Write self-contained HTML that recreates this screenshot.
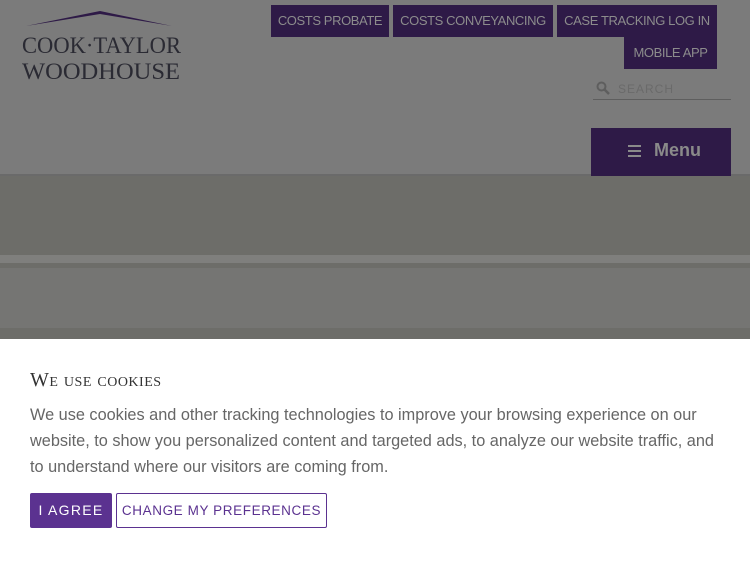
<!DOCTYPE html>
<html><head><meta charset="utf-8"><style>
*{margin:0;padding:0;box-sizing:border-box}
body{width:750px;height:563px;overflow:hidden;background:#fff;font-family:"Liberation Sans",sans-serif;position:relative}
.hdr{position:absolute;left:0;top:0;width:750px;height:176px;background:#7b7b7b;border-bottom:2px solid #6a6a6a}
.hero{position:absolute;left:0;top:176px;width:750px;height:163px;background:#6d6d69}
.l1{position:absolute;left:0;top:255px;width:750px;height:8px;background:#7f7f7d}
.l2{position:absolute;left:0;top:268px;width:750px;height:60px;background:#757573}
.btn{position:absolute;background:#2e1a47;color:#8c8c8c;font-size:13px;height:32px;line-height:32px;text-align:center;white-space:nowrap;letter-spacing:-0.4px}
.logo{position:absolute;left:22px;top:10px;overflow:visible}
.cookie{position:absolute;left:0;top:339px;width:750px;height:224px;background:#fff}
h2{position:absolute;left:30px;top:369px;font-family:"Liberation Serif",serif;font-weight:normal;font-size:20px;color:#333;font-variant:small-caps;letter-spacing:0.5px}
p{position:absolute;left:30px;top:402px;width:720px;font-size:16.3px;line-height:26px;color:#666;white-space:nowrap;letter-spacing:0px}
.b1{position:absolute;left:30px;top:493px;width:82px;height:35px;background:#5b3290;color:#fff;font-size:14px;letter-spacing:1.3px;text-align:center;line-height:35px;border-radius:2px;white-space:nowrap}
.b2{position:absolute;left:116px;top:493px;width:211px;height:35px;border:1px solid #5b3290;color:#5b3290;font-size:13.5px;letter-spacing:0.6px;text-align:center;line-height:33px;border-radius:2px;white-space:nowrap}
</style></head><body>
<div class="hdr"></div>
<div class="hero"></div><div class="l1"></div><div class="l2"></div>
<svg class="logo" width="165" height="62" viewBox="0 0 165 62">
<path d="M4 16 L78 1 L150 16 L78 4 Z" fill="#2e1a47"/>
<text x="0" y="43" font-family="Liberation Serif,serif" font-size="23" fill="#2a2a33" textLength="159" lengthAdjust="spacingAndGlyphs">COOK·TAYLOR</text>
<text x="0" y="69" font-family="Liberation Serif,serif" font-size="23" fill="#2a2a33" textLength="158" lengthAdjust="spacingAndGlyphs">WOODHOUSE</text>
</svg>
<div class="btn" style="left:271px;top:5px;width:118px">COSTS PROBATE</div>
<div class="btn" style="left:393px;top:5px;width:160px">COSTS CONVEYANCING</div>
<div class="btn" style="left:557px;top:5px;width:160px">CASE TRACKING LOG IN</div>
<div class="btn" style="left:624px;top:37px;width:93px">MOBILE APP</div>
<svg style="position:absolute;left:596px;top:81px" width="14" height="14" viewBox="0 0 14 14"><circle cx="5.5" cy="5.5" r="4" stroke="#5e5e5e" stroke-width="2" fill="none"/><path d="M8.5 8.5 L13 13" stroke="#5e5e5e" stroke-width="2.5"/></svg>
<div style="position:absolute;left:618px;top:82px;font-size:12px;color:#6a6a6a;letter-spacing:1px">SEARCH</div>
<div style="position:absolute;left:593px;top:99px;width:138px;height:1px;background:#5e5e5e"></div>
<div style="position:absolute;left:591px;top:128px;width:140px;height:48px;background:#2e1a47"></div>
<svg style="position:absolute;left:628px;top:145px" width="13" height="12"><rect y="0" width="13" height="2" fill="#8a8a8a"/><rect y="5" width="13" height="2" fill="#8a8a8a"/><rect y="10" width="13" height="2" fill="#8a8a8a"/></svg>
<div style="position:absolute;left:654px;top:140px;font-size:18px;font-weight:bold;color:#8a8a8a">Menu</div>
<div class="cookie"></div>
<h2>We use cookies</h2>
<p>We use cookies and other tracking technologies to improve your browsing experience on our<br>website, to show you personalized content and targeted ads, to analyze our website traffic, and<br>to understand where our visitors are coming from.</p>
<div class="b1">I AGREE</div>
<div class="b2">CHANGE MY PREFERENCES</div>
</body></html>
